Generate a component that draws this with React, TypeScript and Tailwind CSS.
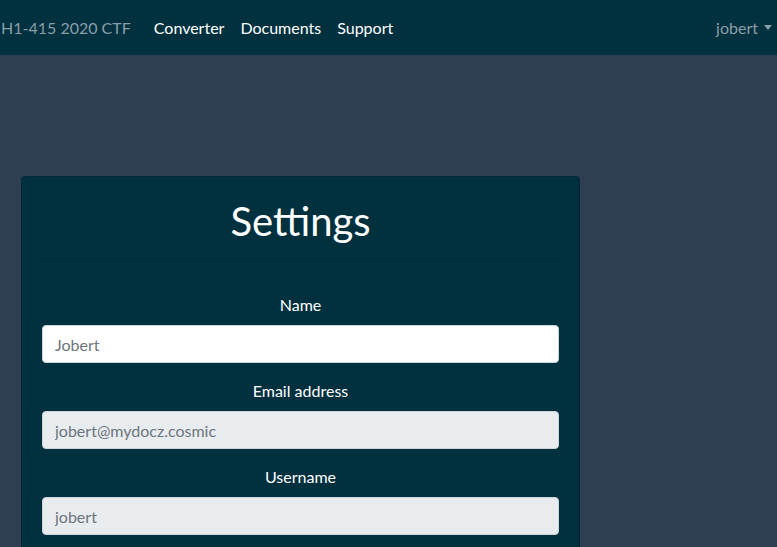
const fields = [
  { label: 'Name', value: 'Jobert', disabled: false },
  { label: 'Email address', value: 'jobert@mydocz.cosmic', disabled: true },
  { label: 'Username', value: 'jobert', disabled: true },
];

const App = () => {
  return (
    <div className="min-h-[547px] bg-[#2f3e50] font-['Lato',sans-serif] text-[16px]">
      {/* Navbar */}
      <nav className="h-[55px] bg-[#01303f] flex items-center justify-between pr-[5px]">
        <div className="flex items-center">
          <a href="#" className="pl-[1px] text-[#8a9ea8] mr-[15px]">H1-415 2020 CTF</a>
          <div className="flex items-center">
            {['Converter', 'Documents', 'Support'].map((l) => (
              <a key={l} href="#" className="px-[8px] text-white">{l}</a>
            ))}
          </div>
        </div>
        <a href="#" className="flex items-center gap-[6px] text-[#8a9ea8]">
          jobert
          <span className="w-0 h-0 border-l-[4px] border-r-[4px] border-t-[5px] border-l-transparent border-r-transparent border-t-[#8a9ea8]" />
        </a>
      </nav>

      {/* Content */}
      <div className="pt-[121px] pl-[21px]">
        <div className="w-[559px] bg-[#01303f] rounded-[4px] border border-[#00283a] px-[20px] pt-[20px] pb-[20px]">
          <h1 className="text-center text-white text-[40px] leading-[48px] font-normal">Settings</h1>
          <hr className="mt-[15px] mb-[32px] mx-[-5px] border-t border-[#012b39]" />
          <form>
            {fields.map((f) => (
              <div key={f.label} className="mb-[16px]">
                <label className="block text-center text-white leading-[24px] mb-[8px]">{f.label}</label>
                <input
                  readOnly
                  disabled={f.disabled}
                  placeholder={f.value}
                  className={`block w-full h-[38px] px-[12px] rounded-[4px] border border-[#ced4da] text-[16px] placeholder:text-[#6c757d] ${
                    f.disabled ? 'bg-[#e9ecef]' : 'bg-white'
                  }`}
                />
              </div>
            ))}
          </form>
        </div>
      </div>
    </div>
  );
};

export default App;
